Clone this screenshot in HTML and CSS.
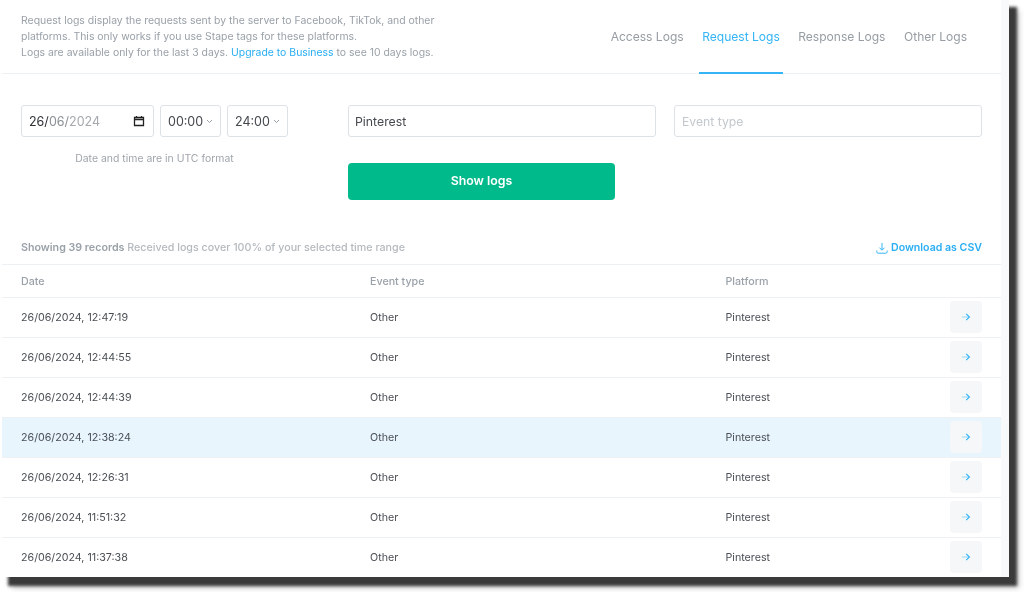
FILE: index.html
```html
<!DOCTYPE html>
<html lang="en">
<head>
<meta charset="utf-8">
<title>Request Logs</title>
<link rel="stylesheet" href="styles.css">
</head>
<body>
<div class="frame">
  <main class="panel">
    <header class="top">
      <p class="intro">Request logs display the requests sent by the server to Facebook, TikTok, and other<br>platforms. This only works if you use Stape tags for these platforms.<br>Logs are available only for the last 3 days. <a class="link" href="#">Upgrade to Business</a> to see 10 days logs.</p>
      <nav class="tabs">
        <a class="tab" href="#">Access Logs</a>
        <a class="tab active" href="#">Request Logs</a>
        <a class="tab" href="#">Response Logs</a>
        <a class="tab" href="#">Other Logs</a>
      </nav>
    </header>
    <section class="filters">
      <div class="when">
        <div class="when-row">
          <div class="field date"><span class="dd">26/</span><span class="mm"><span class="mo">06/</span>2024</span>
            <svg class="cal" width="12" height="12" viewBox="0 0 12 12"><path d="M1.5 2.5h9v8h-9z M1.5 4.500h9" fill="none" stroke="#222" stroke-width="1.3"/><path d="M3.500 1v2M8.500 1v2" stroke="#222" stroke-width="1.2"/></svg>
          </div>
          <div class="field time">00:00<svg class="chev" width="7" height="5" viewBox="0 0 7 5"><path d="M1 1l2.500 2.500L6 1" fill="none" stroke="#9aa1a8" stroke-width="1"/></svg></div>
          <div class="field time">24:00<svg class="chev" width="7" height="5" viewBox="0 0 7 5"><path d="M1 1l2.500 2.500L6 1" fill="none" stroke="#9aa1a8" stroke-width="1"/></svg></div>
        </div>
        <p class="note">Date and time are in UTC format</p>
      </div>
      <div class="field platform">Pinterest</div>
      <div class="field event">Event type</div>
      <button class="show" type="button">Show logs</button>
    </section>
    <div class="summary">
      <p class="count"><b>Showing 39 records</b> Received logs cover 100% of your selected time range</p>
      <a class="csv" href="#"><svg width="12" height="12" viewBox="0 0 12 12"><path d="M6 1v7M3.500 5.700L6 8.200l2.500-2.500M.8 8.500v1.300q0 1.400 1.400 1.400h7.600q1.400 0 1.400-1.400V8.500" fill="none" stroke="#35b5f5" stroke-width="1"/></svg>Download as CSV</a>
    </div>
    <div class="row head"><span>Date</span><span>Event type</span><span>Platform</span></div>
    <div class="row"><span>26/06/2024, 12:47:19</span><span>Other</span><span>Pinterest</span><a class="go" href="#"><svg width="10" height="10" viewBox="0 0 10 10"><use href="#arrow"/></svg></a></div>
    <div class="row"><span>26/06/2024, 12:44:55</span><span>Other</span><span>Pinterest</span><a class="go" href="#"><svg width="10" height="10" viewBox="0 0 10 10"><use href="#arrow"/></svg></a></div>
    <div class="row"><span>26/06/2024, 12:44:39</span><span>Other</span><span>Pinterest</span><a class="go" href="#"><svg width="10" height="10" viewBox="0 0 10 10"><use href="#arrow"/></svg></a></div>
    <div class="row hot"><span>26/06/2024, 12:38:24</span><span>Other</span><span>Pinterest</span><a class="go" href="#"><svg width="10" height="10" viewBox="0 0 10 10"><use href="#arrow"/></svg></a></div>
    <div class="row"><span>26/06/2024, 12:26:31</span><span>Other</span><span>Pinterest</span><a class="go" href="#"><svg width="10" height="10" viewBox="0 0 10 10"><use href="#arrow"/></svg></a></div>
    <div class="row"><span>26/06/2024, 11:51:32</span><span>Other</span><span>Pinterest</span><a class="go" href="#"><svg width="10" height="10" viewBox="0 0 10 10"><use href="#arrow"/></svg></a></div>
    <div class="row"><span>26/06/2024, 11:37:38</span><span>Other</span><span>Pinterest</span><a class="go" href="#"><svg width="10" height="10" viewBox="0 0 10 10"><use href="#arrow"/></svg></a></div>
  </main>
</div>
<svg width="0" height="0" class="defs"><defs><symbol id="arrow" viewBox="0 0 10 10"><path d="M1 5h7" stroke="#9fdcfa" stroke-width="1.1" fill="none"/><path d="M5.200 1.800L8.400 5L5.200 8.200" stroke="#35b5f5" stroke-width="1.2" fill="none"/></symbol></defs></svg>
</body>
</html>
```

FILE: styles.css
```css
* { box-sizing: border-box; }
html, body { margin: 0; height: 592px; overflow: hidden; background: #fff; }
body { font-family: Inter, "Liberation Sans", sans-serif; color: #4a4f55; padding-left: 2px; }
.defs { display: block; height: 0; }
.frame { width: 1007px; height: 577px; background: #f7f9fb; box-shadow: 7px 8px 3px 1px #3a3a3a, 10px 11px 6px #ccc; overflow: hidden; }
.panel { width: 999px; height: 577px; background: #fff; overflow: hidden; filter: blur(.35px); }
p { margin: 0; }
a { text-decoration: none; }
.top { height: 74px; border-bottom: 1px solid #eef1f4; display: flex; justify-content: space-between; padding-left: 19px; }
.intro { font-size: 10.450px; line-height: 16px; color: #9aa1a8; padding-top: 12.500px; }
.link { color: #29aef3; }
.tabs { display: flex; margin-right: 30.500px; }
.tab { font-size: 12.050px; line-height: 16px; color: #979da3; padding: 29px 3.500px 0; height: 74px; margin-left: 11.500px; border-bottom: 2px solid transparent; }
.tab.active { color: #35b5f5; border-bottom-color: #35b5f5; }
.filters { display: grid; grid-template-columns: 327px 326px 308px; grid-template-rows: 32px 37px; row-gap: 26px; padding: 31px 0 0 19px; height: 163px; }
.when { grid-row: 1 / span 2; width: 267px; }
.when-row { display: flex; gap: 6px; }
.field { height: 32px; border: 1px solid #dde2e7; border-radius: 3px; display: flex; align-items: center; padding-left: 7px; font-size: 12.500px; color: #45494e; background: #fff; }
.date { width: 133px; }
.dd { color: #2e3236; }
.mo { color: #8a9096; }
.mm { color: #a4a9ae; }
.cal { margin-left: auto; margin-right: 8px; }
.time { width: 61px; }
.chev { margin-left: 3px; }
.note { font-size: 10.450px; line-height: 16px; color: #a0a6ac; text-align: center; margin-top: 14px; }
.platform { grid-column: 2; width: 308px; padding-left: 6px; font-size: 12.300px; }
.event { grid-column: 3; width: 308px; color: #c3c8cd; font-size: 12.200px; }
.show { grid-column: 2; grid-row: 2; width: 267px; height: 37px; padding: 0 0 2px; border: 0; border-radius: 4px; background: #00ba8c; color: #fff; font: 600 12.350px Inter, "Liberation Sans", sans-serif; }
.summary { height: 28px; display: flex; justify-content: space-between; align-items: flex-start; padding: 4px 19px 0 19px; border-bottom: 1px solid #eef1f4; font-size: 10.700px; line-height: 14px; }
.count { color: #b4b9be; font-weight: 500; }
.count b { color: #9aa1a8; font-weight: 600; }
.csv { display: flex; align-items: center; gap: 3.500px; color: #29aef3; font-weight: 600; font-size: 10.600px; }
.row { display: grid; grid-template-columns: 349px 355.500px 1fr 32px; align-items: center; height: 40px; padding: 0 19px 0 19px; border-bottom: 1px solid #eef1f4; font-size: 10.700px; color: #4a4f55; }
.row.head { height: 33px; color: #9aa1a8; font-weight: 500; }
.row.hot { background: #e8f5fc; }
.go { width: 32px; height: 32px; align-self: start; margin-top: 3px; border-radius: 4px; background: #f5f7f9; display: flex; align-items: center; justify-content: center; }
```
